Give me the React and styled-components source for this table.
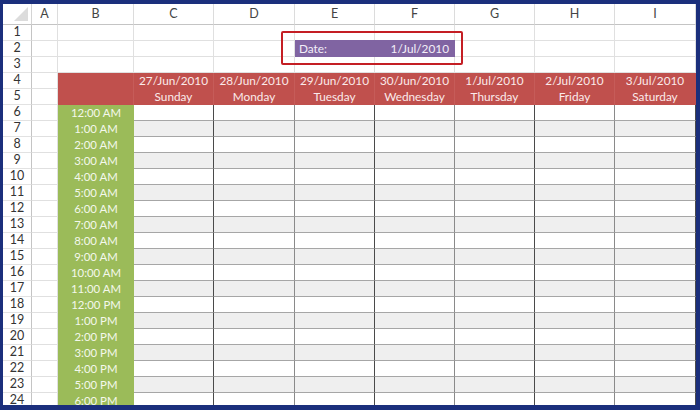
import styled, { createGlobalStyle } from "styled-components";

const GlobalStyle = createGlobalStyle`
  html, body { margin: 0; padding: 0; background: #ffffff; }
  body { font-family: Lato, "Open Sans", sans-serif; }
`;

const COLS = ["A", "B", "C", "D", "E", "F", "G", "H", "I"];
const WIDTHS = [29, 26, 76, 80, 81, 80, 80, 80, 80, 81];

const days = [
  ["27/Jun/2010", "Sunday"],
  ["28/Jun/2010", "Monday"],
  ["29/Jun/2010", "Tuesday"],
  ["30/Jun/2010", "Wednesday"],
  ["1/Jul/2010", "Thursday"],
  ["2/Jul/2010", "Friday"],
  ["3/Jul/2010", "Saturday"],
];

const times = [];
for (let h = 0; h < 19; h++) {
  const hr = h % 12 === 0 ? 12 : h % 12;
  times.push(`${hr}:00 ${h < 12 ? "AM" : "PM"}`);
}

const Frame = styled.div`
  width: 700px;
  height: 410px;
  box-sizing: border-box;
  border: solid #1b2f7c;
  border-width: 4px 4px 5px 3px;
  overflow: hidden;
  background: #fff;
`;

const Sheet = styled.div`
  display: grid;
  grid-template-columns: ${WIDTHS.map((w) => w + "px").join(" ")};
  grid-template-rows: 21px;
  grid-auto-rows: 16px;
  font-size: 11.4px;
  line-height: 1;
`;

const Cell = styled.div`
  box-sizing: border-box;
  display: flex;
  align-items: center;
  justify-content: center;
  white-space: nowrap;
  position: relative;
`;

const Corner = styled(Cell)`
  border-right: 1px solid #d4d4d4;
  border-bottom: 1px solid #c4c4c4;
  &::after {
    content: "";
    position: absolute;
    right: 3px;
    bottom: 3px;
    border-style: solid;
    border-width: 0 0 14px 14px;
    border-color: transparent transparent #dcdcdc transparent;
  }
`;

const ColHead = styled(Cell)`
  color: #444;
  font-size: 12.5px;
  border-right: 1px solid #dcdcdc;
  border-bottom: 1px solid #c4c4c4;
  padding-top: 1px;
`;

const RowNum = styled(Cell)`
  color: #333;
  font-size: 12.5px;
  border-right: 1px solid #c4c4c4;
  border-bottom: 1px solid #e2e2e2;
`;

const Blank = styled(Cell)`
  border-right: 1px solid #e0e0e0;
  border-bottom: 1px solid #e0e0e0;
`;

const Header = styled(Cell)`
  background: #c0504d;
  color: #fbeaea;
  font-size: 11.8px;
  border-right: 1px solid ${({ $last }) => ($last ? "#c0504d" : "#c65c59")};
`;

const Time = styled(Cell)`
  background: #9bbb59;
  color: #f4f8ec;
`;

const Slot = styled(Cell)`
  background: ${({ $shade }) => ($shade ? "#efefef" : "#ffffff")};
  border-right: 1px solid ${({ $soft }) => ($soft ? "#8a8a8a" : "#4a4a4a")};
  border-bottom: 1px solid #a6a6a6;
`;

const DateCell = styled(Cell)`
  grid-column: span 2;
  z-index: 1;
  justify-content: space-between;
  padding: 0 6px 0 4px;
  background: #8064a2;
  color: #f3eff8;
  font-size: 11.8px;
  margin-top: -1px;
`;

const Highlight = styled.div`
  position: absolute;
  left: -14px;
  top: -9px;
  right: -8px;
  bottom: -8px;
  border: 2px solid #c41e24;
  border-radius: 2px;
  pointer-events: none;
`;

function blanks(n, key) {
  return Array.from({ length: n }, (_, i) => <Blank key={`${key}-${i}`} />);
}

export default function App() {
  const cells = [];

  cells.push(<Corner key="corner" />);
  COLS.forEach((c) => cells.push(<ColHead key={`h-${c}`}>{c}</ColHead>));

  // rows 1-3
  cells.push(<RowNum key="r1">1</RowNum>, ...blanks(9, "r1"));
  cells.push(<RowNum key="r2">2</RowNum>, ...blanks(4, "r2a"));
  cells.push(
    <DateCell key="date">
      <span>Date:</span>
      <span>1/Jul/2010</span>
      <Highlight />
    </DateCell>
  );
  cells.push(...blanks(3, "r2b"));
  cells.push(<RowNum key="r3">3</RowNum>, ...blanks(9, "r3"));

  // rows 4-5: red headings
  [0, 1].forEach((line) => {
    cells.push(<RowNum key={`rh${line}`}>{4 + line}</RowNum>, <Blank key={`ah${line}`} />);
    cells.push(<Header key={`bh${line}`} />);
    days.forEach((d, i) =>
      cells.push(
        <Header key={`d${line}-${i}`} $last={i === days.length - 1}>
          {d[line]}
        </Header>
      )
    );
  });

  // rows 6-24: time slots
  times.forEach((t, r) => {
    cells.push(<RowNum key={`rn${r}`}>{6 + r}</RowNum>, <Blank key={`a${r}`} />);
    cells.push(<Time key={`t${r}`}>{t}</Time>);
    days.forEach((_, i) =>
      cells.push(<Slot key={`s${r}-${i}`} $shade={r % 2 === 1} $soft={i % 2 === 1} />)
    );
  });

  return (
    <>
      <GlobalStyle />
      <Frame>
        <Sheet>{cells}</Sheet>
      </Frame>
    </>
  );
}
